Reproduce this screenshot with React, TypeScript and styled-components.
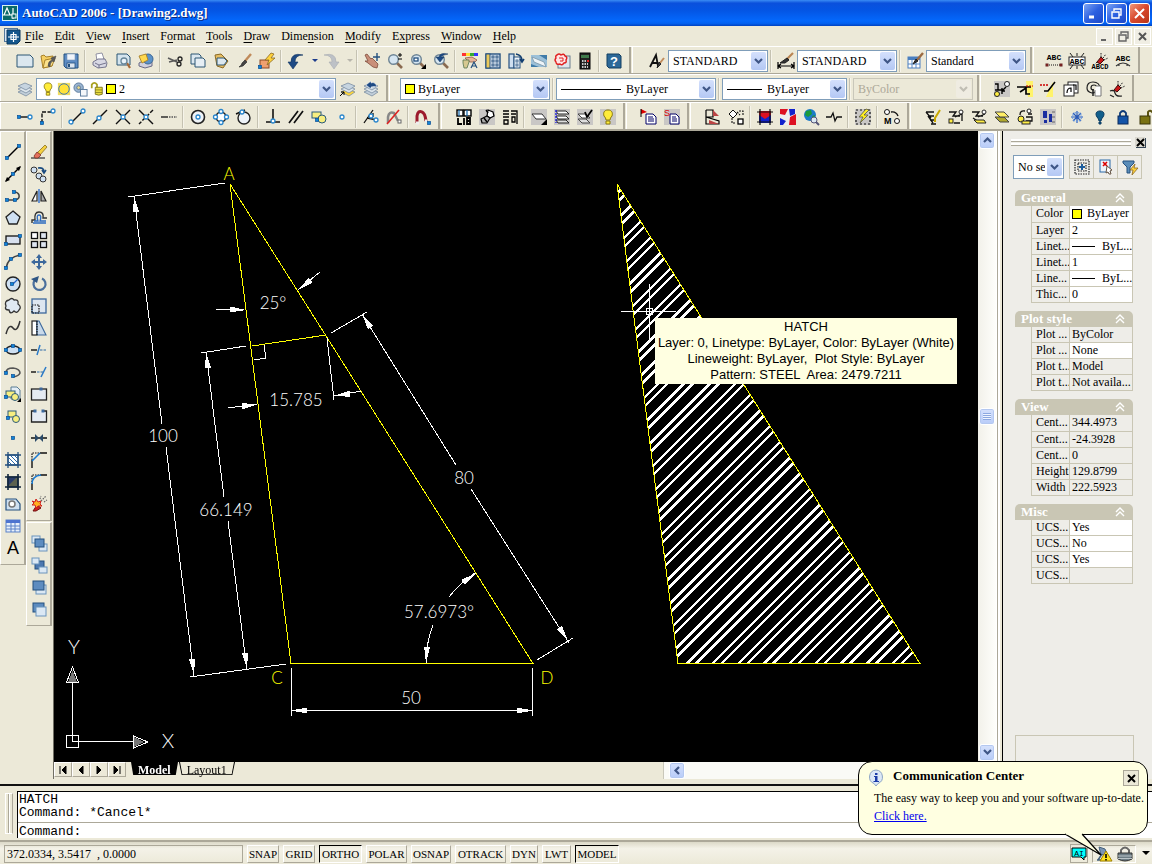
import React, { ReactNode } from 'react';
import styled, { createGlobalStyle, css } from 'styled-components';

const face = '#ece9d8';
const shade = '#aca899';
const panelGrey = '#eeede8';
const navy = '#24507f';
const pale = '#cfe0f2';
const serif = '"Liberation Serif", serif';

const GlobalStyle = createGlobalStyle`
  * { box-sizing: border-box; }
  html, body { margin: 0; padding: 0; }
  body { background: ${face}; font: 12px/16px ${serif}; color: #000; }
  button, select, input, textarea { font: inherit; color: inherit; margin: 0; padding: 0; border: 0; background: none; border-radius: 0; }
`;

/* ---------- icons ---------- */

const dot = (x: number, y: number) => <rect x={x - 1.5} y={y - 1.5} width="3" height="3" fill="#1084d8" stroke="#0b4f94" strokeWidth="0.7" />;
const ring = (x: number, y: number, r = 2) => <circle cx={x} cy={y} r={r} fill="#fff" stroke="#2a86cc" strokeWidth="1.3" />;
const stroke = (d: string, c = '#222', w = 1.4, dash?: string) => <path d={d} fill="none" stroke={c} strokeWidth={w} strokeDasharray={dash} />;
const shape = (d: string, f: string, c = '#222', w = 1) => <path d={d} fill={f} stroke={c} strokeWidth={w} />;
const box = (x: number, y: number, w: number, h: number, f: string, c = '#222', sw = 1) => <rect x={x} y={y} width={w} height={h} fill={f} stroke={c} strokeWidth={sw} />;
const greyBack = <rect width="16" height="16" fill="#c9c7c5" />;
const sheets = (a: string, b: string, c: string, line = '#6f8399') => (
  <>
    {shape('M1 11L8 8L15 11L9 15Z', c, line, 0.7)}
    {shape('M1 8L8 5L15 8L9 12Z', b, line, 0.7)}
    {shape('M1 5L8 2L15 5L9 9Z', a, line, 0.7)}
  </>
);
const brush = (
  <>
    {stroke('M15 1L9 8', '#c08a5a', 2.4)}
    {shape('M9 7L11 9L7 13L3 14Q6 12 6 10Z', '#444', '#222', 0.6)}
  </>
);
const ants = (
  <>
    {shape('M5 9L9 4L12 7L8 11Z', '#c81818', '#3a0a0a', 1)}
    {stroke('M9 4V0M11 5L14 1M12 7L16 5M5 9L3 11', '#222', 1, '1.5 1')}
  </>
);
const bulb = shape('M8 1C4 1 3 4 4 7Q6 9 6 11H10Q10 9 12 7C13 4 12 1 8 1ZM6 12H10V15H6Z', '#ffec3a', '#8a7a10', 1);
const gear = (
  <>
    <circle cx="8" cy="8" r="6.500" fill="#eef3f8" stroke="#222" strokeWidth="1.6" />
    <circle cx="8" cy="8" r="2" fill="#fff" stroke="#2a86cc" strokeWidth="1.3" />
  </>
);
const zoomGlass = (
  <>
    {stroke('M10 10L15 15', '#8a6a50', 2.6)}
    <circle cx="6.500" cy="6.500" r="4.800" fill="#d6e6f2" stroke="#6f8595" strokeWidth="1.4" />
  </>
);
const abc = (y: number) => <text x="8" y={y} textAnchor="middle" fontFamily="Liberation Mono" fontWeight="700" fontSize="8">ABC</text>;

const icons: Record<string, ReactNode> = {
  newFile: shape('M0 2H13L16 5V14H0Z', '#dbe7ef', '#2d5674'),
  open: <>{shape('M1 3L4 2L6 4L13 3L12 13L3 15Z', '#f5cf62', '#a8812a')}{shape('M5 7L15 5L12 13L3 15Z', '#fbe18c', '#a8812a')}{shape('M8 13Q8 8 12 7L11 5L16 3L14 9L13 8Q10 9 10 14Z', '#5a5a5a', '#444', 0.5)}</>,
  save: <>{shape('M1 1H15V15H3L1 13Z', '#5d8cc4', navy)}{box(4, 1, 8, 6, '#f0f4fa', '#7c98b8', 0.6)}{box(4, 10, 8, 5, '#dce6f0', navy, 0.8)}<rect x="5" y="11" width="2" height="3" fill={navy} /></>,
  print: <>{shape('M4 1L10 0L12 6L5 8Z', '#fff', '#7a7a90', 0.8)}{shape('M1 9L6 6L13 6L15 10L14 14L6 15L1 12Z', '#d8d8e4', '#6a6a84', 0.9)}{stroke('M3 10L7 12L14 10M7 12V15', '#6a6a84', 0.9)}</>,
  preview: <>{shape('M2 1H12L15 4V12H2Z', '#d4e4ee', '#2d5674')}{stroke('M12 10L15 15', '#a86b3a', 2.2)}<circle cx="9" cy="8" r="3" fill="#e9f3fa" stroke="#67869a" strokeWidth="1.3" /></>,
  publish: <>{shape('M1 10L7 7L14 9L14 13L7 15L1 13Z', '#d0d0de', '#6a6a84')}<circle cx="10" cy="6" r="5" fill="#5c92c8" stroke="#3b6796" />{shape('M1 3L8 1L10 7L4 10Z', '#ffd84c', '#a8812a', 0.9)}</>,
  cut: <>{stroke('M1 5L10 9M2 9L10 7', '#5a5a5a', 1.5)}<circle cx="13" cy="6" r="2" fill="none" stroke="#222" strokeWidth="1.3" /><circle cx="12" cy="11" r="2" fill="none" stroke="#222" strokeWidth="1.3" /></>,
  copy: <>{shape('M1 1H9L11 3V11H1Z', '#dbe7ef', '#2d5674')}{shape('M5 5H13L15 7V14H5Z', '#e6eef4', '#2d5674')}</>,
  paste: <>{shape('M2 2L8 1L15 8L10 15L4 13Z', '#e6bd62', '#8c6a24')}{shape('M4 5H11L14 8L11 12H4Z', '#dbe7ef', '#2d5674')}</>,
  match: brush,
  blockEdit: <>{box(1, 7, 9, 8, '#f0a070', '#8a4a28')}{shape('M12 0L6 7L10 7L8 12L16 5L12 5L15 1Z', '#ffd23c', '#8c6a24', 0.8)}{dot(1, 14)}</>,
  undo: shape('M15 2Q7 2 7 9H10L5 16L0 9H3Q3 -1 15 2Z', '#1e4a84', '#12345f', 0.6),
  redo: shape('M1 2Q9 2 9 9H6L11 16L16 9H13Q13 -1 1 2Z', '#bdc1c6', '#a9adb2', 0.6),
  caret: shape('M5 6H11L8 9Z', '#1c3c8c', 'none'),
  caretOff: shape('M5 6H11L8 9Z', '#b8b6ac', 'none'),
  pan: <>{shape('M1 2L3 1L7 6L8 5L11 8L14 11L13 15L9 14L4 10L1 8L4 8Z', '#c98f7a', '#7c4a3a', 0.8)}{stroke('M13 0V8M9 4H16', navy, 1.4)}</>,
  zoomRt: <>{zoomGlass}{stroke('M13 0V4M11 2H15M11 6H15', '#000', 1)}</>,
  zoomWin: <>{zoomGlass}{box(4, 5, 4, 3, '#fff', navy, 1.3)}<path d="M16 11V16H11Z" /></>,
  zoomPrev: <>{zoomGlass}{shape('M15 1Q7 -1 6 4L3 4L7 9L11 4H8Q9 2 15 1Z', '#1e4a84', '#12345f', 0.5)}</>,
  props: <><rect x="0" y="0" width="4" height="3" fill="#f33" /><rect x="4" y="0" width="4" height="3" fill="#fd3" /><rect x="8" y="0" width="4" height="3" fill="#3a3" /><rect x="12" y="0" width="4" height="3" fill="#33f" />{shape('M3 5L10 4L15 7L13 9L8 9L5 7Z', '#e6b49a', '#8c5a44', 0.8)}{shape('M1 7H7V9L5 15H2L1 10Z', '#d6c890', '#55754e', 0.8)}{stroke('M9 15L12 9L15 15M10 13H14', navy, 1.2)}</>,
  designCenter: <>{box(1, 1, 14, 14, '#eaf2fa', navy, 1.4)}<rect x="1" y="1" width="4" height="14" fill="#ecca5a" stroke={navy} />{box(7, 3, 2, 2, '#fff', navy)}{box(11, 3, 2, 2, '#fff', navy)}{box(7, 7, 2, 2, '#fff', navy)}{box(11, 7, 2, 2, '#fff', navy)}{box(7, 11, 2, 2, '#fff', navy)}{box(11, 11, 2, 2, '#fff', navy)}</>,
  toolPalette: <>{box(1, 1, 5, 14, '#cfdff0', navy, 1.2)}{box(6, 4, 6, 11, '#f0f6fb', navy, 1)}{stroke('M8 1Q14 2 14 8M12 6L14 9L16 6', '#123e70', 1.6)}{box(8, 7, 2, 2, '#fff', navy, 0.8)}{box(8, 11, 2, 2, '#fff', navy, 0.8)}</>,
  sheetSet: <><rect x="0" y="2" width="16" height="12" fill="#9cc0d8" />{shape('M1 4L13 9L15 14L3 9Z', '#eef4f8', '#7a94a4', 0.8)}<path d="M0 11L8 14H0ZM8 2H16V7Z" fill="#3f7ba8" /></>,
  markup: <>{box(4, 3, 12, 12, '#dfe6ec', '#6a7f8e')}{shape('M3 2Q5 0 7 2Q10 0 11 3Q14 4 12 7Q13 10 10 10Q8 13 6 11Q2 12 2 9Q0 7 2 5Q1 3 3 2Z', '#ffe4e4', '#e02020', 1.4)}{stroke('M5 5H9V8H6', '#e02020', 1)}</>,
  calc: <>{box(3, 0, 10, 16, '#222', '#000')}<rect x="4" y="2" width="8" height="3" fill="#3f7a4a" /><path d="M5 8H11M5 11H11M5 14H11" stroke="#fff" strokeWidth="1.6" strokeDasharray="1.5 1" /><rect x="10" y="7" width="2" height="2" fill="#e22" /></>,
  help: <>{shape('M1 1H13L15 3V15H3L1 13Z', '#2c6898', '#123e60')}<text x="8" y="13" textAnchor="middle" fontFamily="Liberation Sans" fontWeight="700" fontSize="13" fill="#fff">?</text></>,
  textStyle: <>{stroke('M1 14L7 2L9 13M3 10H9', '#111', 1.8)}{stroke('M15 5L11 10', '#c08a5a', 2)}{shape('M10 9L12 11L8 15Z', '#444')}</>,
  dimStyle: <>{stroke('M0 9V16M16 9V16M1 13H15M3 11L0 13L3 15M13 11L16 13L13 15', '#000', 1.2)}{stroke('M15 0L9 6', '#b98452', 2.2)}{shape('M9 5L11 7L7 10L2 10Z', '#333')}</>,
  tableStyle: <>{box(1, 4, 12, 11, '#fff', '#4a7fc0')}<rect x="1" y="4" width="12" height="3" fill="#4a7fc0" />{stroke('M1 11H13M5 5V15M9 5V15', '#4a7fc0', 0.9)}{stroke('M16 0L10 7', '#9c6b42', 2.4)}{shape('M9 6L11 8L6 11Z', '#333')}</>,
  abcDots: <>{abc(7)}{stroke('M1 12H15', '#111', 1.2, '1 1')}{box(0, 11, 2, 2, '#a22', '#622')}{box(14, 11, 2, 2, '#a22', '#622')}</>,
  abcMask: <>{stroke('M1 0L4 4M15 0L12 4M1 16L4 12M15 16L12 12M8 0V3M8 13V16', '#222', 1)}{box(0, 4, 16, 8, '#fff')}{abc(11)}</>,
  abcBug: <>{ants}<text x="8" y="16" textAnchor="middle" fontFamily="Liberation Mono" fontWeight="700" fontSize="7">ABCD</text></>,
  abcArc: <>{abc(8)}{stroke('M1 13Q8 7 15 13M4 11V13M12 11V13', '#333', 1.1)}</>,
  layers: sheets('#c6d4e0', '#dde6ec', '#c2cfda'),
  makeCurrent: <>{sheets('#c6d4e0', '#dde6ec', '#ffd63c')}{stroke('M0 15L4 11M1 11H4V14', '#000', 1)}</>,
  layerPrev: <>{sheets('#c6d4e0', '#dde6ec', '#c2cfda')}{shape('M14 6Q12 0 8 2V0L3 4L8 8V6Q11 5 14 6Z', '#1e4a84', '#fff', 0.5)}</>,
  bulbOn: bulb,
  sun: <><rect x="1" y="1" width="14" height="14" fill="#f0dc60" /><circle cx="8" cy="8" r="6" fill="#ffe23a" stroke="#2b6cb8" /></>,
  vpFreeze: <><circle cx="6" cy="6" r="5" fill="#9ab4d0" stroke="#5a7a9c" /><circle cx="6" cy="6" r="2" fill="#e8d88c" stroke="#5a7a9c" />{box(8, 8, 7, 7, '#f4f7fa', '#5a7a9c')}</>,
  unlock: <>{stroke('M2 7V3Q5 -1 8 3V7', '#a8a020', 2)}{shape('M6 6H14V14Q10 16 6 14Z', '#e8dc40', '#77701a')}{stroke('M6 9H14M6 12H14', '#77701a', 0.8)}</>,
  layWalk: <>{greyBack}{stroke('M1 3H4V9M1 9H8V13M12 6L8 10M8 7V10H11', '#000', 1.4)}<circle cx="3" cy="13" r="2.500" fill="#ffee44" stroke="#222" /><circle cx="13" cy="3" r="2.500" fill="#fff" stroke="#222" /></>,
  matchYellow: <><path d="M9 0H16V16H11Z" fill="#fff36a" />{stroke('M0 6H14M3 11L9 7V13H13', '#000', 1.7)}{stroke('M9 5H16', '#c00', 1, '2 1')}</>,
  trimYellow: <><path d="M13 1V16H6Z" fill="#fff36a" />{stroke('M0 4H9', '#c00', 1.6, '2 1')}{stroke('M15 1L8 10H4', '#000', 1.6)}</>,
  copyPages: <>{box(5, 1, 10, 11, '#fff')}{box(1, 4, 10, 11, '#fff')}{stroke('M4 12Q4 7 8 7V11M10 4H13V9', '#000', 1.2)}</>,
  spiral: <>{stroke('M8 9Q5 9 5 7Q5 4 8 4Q11 4 11 8Q10 12 6 12Q1 11 1 7Q1 1 7 1Q14 1 14 8', '#222', 1.2)}{shape('M10 5H15V15H9V9', '#fff', '#777')}{stroke('M7 8V15', '#222', 1.5)}</>,
  bug: <>{ants}{stroke('M1 10Q5 8 6 12T13 15M1 14L5 16', '#222', 1.2)}</>,
  snapTemp: <>{stroke('M1 8H14', '#111', 1.4)}{dot(2, 8)}{ring(13, 8)}</>,
  snapFrom: <>{stroke('M2 14V3H12', '#111', 1.4, '4 1.5')}{dot(2, 14)}{ring(13, 2)}</>,
  snapEnd: <>{stroke('M2 14L14 2', '#111')}{ring(2, 13)}{ring(14, 2)}</>,
  snapMid: <>{stroke('M1 15L15 1', '#111')}{ring(7, 9)}</>,
  snapInt: <>{stroke('M1 1L15 15M15 1L1 15', '#111')}{ring(8, 8)}</>,
  snapApp: <>{stroke('M1 1L15 15', '#111')}{stroke('M15 1L1 15', '#111', 1.4, '4 1.5')}{ring(8, 8)}</>,
  snapExt: <>{stroke('M0 8H7', '#222')}{stroke('M8 8H16', '#555', 1.4, '1.5 1')}</>,
  snapCen: gear,
  snapQua: <><circle cx="8" cy="8" r="5" fill="#fff" stroke="#222" strokeWidth="1.4" />{ring(8, 2.5)}{ring(8, 13.5)}{ring(2.5, 8)}{ring(13.5, 8)}</>,
  snapTan: <><circle cx="8" cy="9" r="6" fill="#eef3f8" stroke="#222" strokeWidth="1.4" />{stroke('M0 5L9 1', '#111')}{ring(6, 3)}</>,
  snapPer: <>{stroke('M8 0V12M1 13H15', '#111', 1.6)}{ring(8, 12)}</>,
  snapPar: stroke('M1 14L10 2M6 14L15 2', '#111', 1.7),
  snapIns: <>{box(1, 3, 9, 6, '#f7ee80', '#2a5a7a')}<circle cx="11" cy="10" r="4" fill="#f7ee80" stroke="#2a5a7a" />{dot(6, 11)}</>,
  snapNode: ring(8, 8),
  snapNear: <>{stroke('M1 14L10 1M10 4V8M4 9L14 11', '#111', 1.3)}{ring(8, 7)}{ring(13, 11)}</>,
  snapNone: <>{stroke('M2 14V8Q3 2 8 4L12 12', '#888', 2.5)}{stroke('M1 15L13 1', '#d22', 1.6)}{box(12, 11, 3, 3, '#fff', '#666')}</>,
  snapSet: <>{stroke('M2 14V7Q3 1 7 3Q10 4 11 12', '#9c1a2c', 3)}{stroke('M1 14H4M10 12H12', '#eee', 3)}{dot(14, 14)}</>,
  lib: <>{box(1, 1, 6, 6, '#fff', '#000', 1.4)}{box(8, 1, 7, 6, '#fff', '#000', 1.4)}<path d="M3 1V7M11 1V7" stroke="#16a" strokeWidth="1.2" />{stroke('M2 9V15H6M8 9V16M11 9V15H14V9ZM11 12H14', '#000', 1.8)}</>,
  bolt: <>{greyBack}{shape('M9 1L14 3L15 7L11 9L8 7Z', '#fff', '#000', 1.2)}{shape('M8 7L11 9L8 14L3 14L2 10Z', '#aaa', '#000', 1.2)}{stroke('M5 9L8 13M7 1L9 4', '#000', 1.4)}</>,
  bookmark: <>{stroke('M1 2H7M1 5H7M1 8H7M2 11H6V15H2ZM9 2H15V15M9 5H14M10 8V13H13V8Z', '#000', 1.3)}</>,
  sheetCorner: <>{greyBack}{shape('M1 5H11L15 10H5Z', '#fff', '#333')}<path d="M16 10V16H10Z" /></>,
  stackGrey: <>{greyBack}{shape('M2 2H12L15 5H4Z', '#fff', '#222')}{shape('M2 7H12L15 10H4Z', '#fff', '#222')}{shape('M2 11H12L15 14H4Z', '#ddd', '#222')}{stroke('M2 1V14', '#22d', 1.4, '2 1')}</>,
  stackCheck: <>{greyBack}{shape('M1 5H9L13 9H5Z', '#fff', '#444')}{shape('M1 10H9L13 14H5Z', '#ddd', '#444')}{stroke('M8 3L10 8L15 1', '#000', 1.8)}</>,
  bulbGrey: <>{greyBack}{bulb}</>,
  pageRed: <>{shape('M5 5H12L15 8V15H5Z', '#fff', '#006')}{stroke('M7 8H12M7 10H13M7 12H13', '#006', 1)}<path d="M0 0L6 3L0 5Z" fill="#d00" />{stroke('M0 0V8', '#000', 1)}</>,
  pageS: <>{greyBack}{shape('M6 5H12L15 8V15H6Z', '#fff', '#006')}{stroke('M8 8H12M8 10H13M8 12H13', '#006', 1)}<text x="0" y="7" fontSize="9" fill="#d00" fontFamily="Liberation Sans">S</text></>,
  flags: <>{stroke('M1 1V15H8M1 1H8V8H1M1 8L14 12V15L1 15', '#000', 1.2)}<path d="M8 1L14 7H8ZM4 11L14 15H4Z" fill="#b44" /></>,
  blocksSwap: <>{shape('M5 1L9 5L5 9L1 5Z', '#fff', '#111')}{stroke('M4 9V14H8M11 2H15V7M9 3L12 6', '#111', 1.1, '2 1')}{box(10, 10, 5, 5, '#fff', '#000', 1.3)}</>,
  imgA: <><rect x="2" y="2" width="12" height="12" fill="#d12" /><path d="M2 6L8 10L14 6V14H2Z" fill="#12c" />{stroke('M3 0V16M0 3H16M13 0V16M0 13H16', '#111', 1.2)}</>,
  imgB: <><rect width="16" height="16" fill="#eee" /><path d="M0 0H8L5 6L0 5ZM10 8L16 5V16H9Z" fill="#d12" /><path d="M9 0H15V5L10 7ZM0 9L6 12L3 16H0Z" fill="#12c" /></>,
  globe: <><circle cx="7" cy="6" r="6" fill="#1a7ac8" /><path d="M3 2L8 1L9 5L5 8L2 6ZM9 7L12 6L11 10Z" fill="#1a9a3a" /><circle cx="11" cy="11" r="3" fill="#dbe8f2" stroke="#557" />{stroke('M13 13L16 16', '#557', 2)}</>,
  pulse: stroke('M0 8H5L7 4L9 12L11 8H16', '#111', 1.3),
  quick: <>{greyBack}{stroke('M1 1H15V15H1Z', '#111', 1.2, '2 2')}{shape('M11 0L4 8H8L5 14L13 6H9L14 1Z', '#ffee22', '#554', 0.8)}</>,
  rename: <><circle cx="3" cy="3" r="2.500" fill="#fff" stroke="#111" /><circle cx="13" cy="12" r="2.500" fill="#fff" stroke="#111" />{stroke('M7 3Q12 2 14 7', '#111', 1.4)}<text x="0" y="15" fontSize="9" fontWeight="700" fontFamily="Liberation Sans">M</text></>,
  layEdit: <>{stroke('M1 3H9M3 7H9M5 11H10M6 15H11M1 3L6 9L3 7L8 14', '#111', 1.3)}{stroke('M15 1L10 9V13', '#caa800', 2)}</>,
  layMatch: <>{stroke('M1 3H8L5 7H12M7 8L14 5V12M6 14H12', '#111', 1.3)}<circle cx="13" cy="3" r="2" fill="#fff" stroke="#222" />{box(1, 10, 4, 4, '#ffee44')}</>,
  layCur: <>{stroke('M1 3H8L5 7H12M7 8L14 5M2 9L8 13', '#111', 1.3)}<circle cx="13" cy="3" r="2" fill="#fff" stroke="#222" />{shape('M3 11H13L15 14H6Z', '#ffee44')}</>,
  layFlat: <>{shape('M1 8H10L15 13H6Z', '#b0a92c', '#444')}{shape('M1 3H10L15 8H6Z', '#ffee66', '#444')}</>,
  layCopy: <>{stroke('M8 2Q3 1 3 6M9 8H15V12H9M11 5H15', '#111', 1.3)}<circle cx="12" cy="2" r="2" fill="#fff" stroke="#222" /><circle cx="4" cy="10" r="3" fill="#ffee44" stroke="#222" />{box(5, 12, 8, 3, '#ffee44')}</>,
  layIso: <>{greyBack}<path d="M3 2H7V9H3ZM4 11H7V14H4ZM9 5H12V13H9Z" fill="#1a2ea0" />{stroke('M12 3H15M12 8H15M12 13H15', '#666', 1)}</>,
  snow: <>{stroke('M8 2V14M2 8H14M4 4L12 12M12 4L4 12', '#2a5ab8', 1.2)}<circle cx="8" cy="8" r="4.500" fill="none" stroke="#6a9ae0" strokeWidth="1.2" strokeDasharray="2 1" /></>,
  bulbOff: shape('M8 2C4 2 3 5 5 8Q7 10 7 12H9Q9 10 11 8C13 5 12 2 8 2ZM7 13H9V15H7Z', '#12608c', '#0a3a60', 1),
  lock: <>{stroke('M5 8V4Q8 0 11 4V8', '#0e3a78', 1.8)}{box(3, 7, 10, 8, '#1454a8', '#0a2a5a')}</>,
  lockOpen: <>{stroke('M10 8V3Q12 0 15 4', '#5a5210', 2)}{box(2, 7, 10, 8, '#7a7212', '#3a3608')}</>,
  /* draw */
  line: <>{stroke('M2 14L14 2', '#000')}{dot(2, 14)}{dot(14, 2)}</>,
  xline: <>{stroke('M1 15L15 1', '#000')}<path d="M0 16L2 11L5 14ZM16 0L14 5L11 2Z" />{dot(8, 8)}</>,
  pline: <>{stroke('M2 12H10M10 12Q15 11 14 7Q13 4 9 4', '#444', 1.6)}{dot(2, 12)}{dot(10, 12)}{dot(9, 4)}</>,
  polygon: shape('M8 1L15 7L12 14H4L1 7Z', pale, '#222', 1.3),
  rect: <>{box(1, 4, 14, 8, '#d8e0ee', '#111', 1.3)}{dot(1, 12)}{dot(15, 4)}</>,
  arc: <>{stroke('M1 14Q3 3 15 1', '#444', 1.5)}{dot(1, 14)}{dot(6, 5)}{dot(15, 1)}</>,
  circle: <><circle cx="8" cy="8" r="7" fill={pale} stroke="#222" strokeWidth="1.4" />{stroke('M8 8L13 3', '#26c', 1.3)}{dot(7, 8)}</>,
  cloud: shape('M4 2Q7 -1 9 2Q14 1 13 6Q17 9 14 12Q12 16 9 13Q5 17 4 12Q-1 12 1 8Q-1 3 4 2Z', '#e0e9f2', '#333', 1.3),
  spline: stroke('M1 14Q4 3 8 8T15 1', '#333', 1.5),
  ellipse: <><ellipse cx="8" cy="8" rx="7" ry="4" fill={pale} stroke="#222" strokeWidth="1.3" />{dot(1, 8)}{dot(15, 8)}{dot(8, 4)}</>,
  ellArc: <>{stroke('M1 9Q1 4 8 4Q15 5 15 9Q14 12 8 13', '#555', 1.6)}{dot(1, 9)}{dot(8, 12)}</>,
  insBlock: <>{shape('M6 1H12L15 4V13H6Z', '#e3edf5', '#5a7c94')}{box(1, 5, 9, 6, '#f7ee80', '#2a5a7a')}<circle cx="10" cy="11" r="3.500" fill="#f7ee80" stroke="#2a5a7a" /><path d="M16 12V16H12Z" />{dot(1, 11)}</>,
  mkBlock: <>{box(3, 3, 8, 6, '#f7ee80', '#2a5a7a')}<circle cx="11" cy="11" r="3.500" fill="#f7ee80" stroke="#2a5a7a" />{dot(3, 10)}</>,
  point: dot(8, 8),
  hatch: <>{box(3, 3, 10, 10, '#fff', navy, 1.2)}{stroke('M3 5L11 13M5 3L13 11M3 9L7 13M9 3L13 7', '#2a6aa8', 1)}{stroke('M0 3H16M0 13H16M3 0V16M13 0V16', navy, 1.3)}</>,
  gradient: <>{box(3, 3, 10, 10, '#5c6250', '#12263c', 1.2)}<path d="M3 3H12L3 12Z" fill="#2a3c6a" />{stroke('M0 3H16M0 13H16M3 0V16M13 0V16', '#12263c', 1.6)}</>,
  region: <>{shape('M1 3H11L15 8V14H1Z', '#cfe0f0', navy, 1.2)}<circle cx="7" cy="8" r="3" fill="#fff" stroke="#777" strokeWidth="1.5" /></>,
  table: <>{box(1, 2, 14, 12, '#e8f0fb', '#5a82c8')}<rect x="1" y="2" width="14" height="3" fill="#4d74d0" />{stroke('M1 8H15M1 11H15M6 5V14M10 5V14', '#5a82c8', 1)}</>,
  mtext: <text x="8" y="14" textAnchor="middle" fontFamily="Liberation Sans" fontSize="18">A</text>,
  /* modify */
  erase: <>{stroke('M0 14H14', '#333', 1.2)}{shape('M14 1L16 3L9 11L6 9Z', '#f4d040', '#8a7020', 0.8)}{shape('M6 8L10 11L7 14H4L3 12Z', '#e4705c', '#7a3428', 0.8)}</>,
  copyObj: <><circle cx="3" cy="4" r="3" fill={pale} stroke="#333" /><circle cx="8" cy="10" r="3" fill={pale} stroke="#333" /><circle cx="12" cy="13" r="3" fill={pale} stroke="#333" />{stroke('M7 2Q13 1 13 6M11 4L13 7L15 4', '#1c4c80', 1.6)}</>,
  mirror: <>{shape('M1 13L6 3V13Z', '#fff', '#222', 1.2)}{shape('M15 13L10 3V13Z', '#aaa', '#222', 1.2)}{stroke('M8 1V15', '#26c', 1.3)}</>,
  offset: <>{stroke('M1 13V10H4Q3 2 8 2Q13 2 12 8H16', '#333', 1.4)}{stroke('M2 13H15M3 11H7Q5 5 8 5Q11 5 9 11H15', '#2a6ac0', 1.3)}</>,
  array: <>{box(0.5, 0.5, 6, 6, '#fff', '#111', 1.3)}{box(9.5, 0.5, 6, 6, '#dfe6f0', '#111', 1.3)}{box(0.5, 9.5, 6, 6, '#dfe6f0', '#111', 1.3)}{box(9.5, 9.5, 6, 6, '#dfe6f0', '#111', 1.3)}</>,
  move: <>{stroke('M8 2V14M2 8H14', '#3c689c', 2)}<path d="M8 0L11 4H5ZM8 16L11 12H5ZM0 8L4 5V11ZM16 8L12 5V11Z" fill="#3c689c" /></>,
  rotate: <>{stroke('M4 4A6 6 0 1 0 11 2.500', '#4a6f9c', 2.2)}<path d="M0 3L8 0L6 7Z" fill="#2f5684" /></>,
  scale: <>{box(1, 1, 14, 14, '#dde6f0', '#3c689c', 1.3)}{stroke('M1 7H8V15H1Z', '#111', 1.2, '1.5 1')}</>,
  stretch: <>{box(1, 1, 5, 14, '#fff', '#222', 1.2)}{shape('M8 1L15 15H6V1Z', '#c9d9ea', '#3c689c', 1.1)}{stroke('M6 1V15', '#111', 1.2, '1.5 1')}</>,
  trim: <>{stroke('M0 8H6', '#111')}{stroke('M9 3L6 13', '#2a7ac8', 1.5)}{stroke('M9 8H16', '#2a6aa8', 1.2, '2.5 1')}</>,
  extend: <>{stroke('M0 8H5', '#111')}{stroke('M15 3L10 13', '#2a7ac8', 1.5)}{stroke('M6 8H12', '#2a6aa8', 1.2, '2.5 1')}</>,
  breakPt: <>{box(0.5, 3, 15, 11, '#e4eaf2', '#222', 1.3)}{box(9, 2, 2, 2, '#3c689c', '#3c689c')}</>,
  breakObj: <>{shape('M3 3H0.5V14H15.500V3H12', '#e4eaf2', '#222', 1.3)}{box(3, 2, 2, 2, '#3c689c', '#3c689c')}{box(11, 2, 2, 2, '#3c689c', '#3c689c')}</>,
  join: <>{stroke('M0 8H16', '#111', 1.5)}<path d="M4 4L8 8L4 12ZM12 4L8 8L12 12Z" fill="#2a4a68" /></>,
  chamfer: <>{stroke('M1 16V8M9 1H16', '#111', 1.4)}{stroke('M1 8V1H9', '#111', 1.2, '1.5 1')}{stroke('M1 9L9 1', '#1a7ad0', 1.6)}</>,
  fillet: <>{stroke('M1 16V9M9 1H16', '#111', 1.4)}{stroke('M1 8V1H9', '#111', 1.2, '1.5 1')}{stroke('M1 10Q1 2 10 1', '#1a7ad0', 1.6)}</>,
  explode: <>{shape('M2 15L6 9L10 12L5 15Z', '#d02020', '#701010')}<path d="M1 5L4 6L5 3L7 6L10 5L9 8L11 10L7 10L5 12L4 9L1 9L3 7Z" fill="#ffb020" stroke="#d02020" />{stroke('M10 5L15 0M13 6L16 4M9 3L10 0', '#666', 1.2, '1.5 1')}</>,
  front: <>{box(1, 1, 8, 7, '#dbe8f4', '#6a94bc')}{box(8, 9, 8, 7, '#dbe8f4', '#6a94bc')}{box(4, 4, 9, 8, '#5d8cc0', navy)}</>,
  back: <>{box(4, 4, 9, 8, '#4d78b0', navy)}{box(1, 1, 7, 6, '#dbe8f4', '#6a94bc')}{box(8, 10, 8, 6, '#dbe8f4', '#6a94bc')}</>,
  above: <>{box(5, 6, 10, 9, '#dbe8f4', '#6a94bc')}{box(2, 2, 11, 9, '#5d8cc0', navy)}</>,
  under: <>{box(2, 2, 11, 9, '#5d8cc0', navy)}{box(5, 6, 10, 9, '#dbe8f4', '#6a94bc')}</>,
  pickAdd: <>{stroke('M1 1H15V15H1Z', '#222', 1.2, '1.5 1')}{stroke('M4 4H12V12H4Z', '#222', 1.2, '1.5 1')}{stroke('M8 5V11M5 8H11', '#1c5c9c', 2)}</>,
  selectObj: <>{box(2, 1, 10, 12, '#eef4fa', '#2a6aa8')}{stroke('M5 3L9 7M9 3L5 7', '#d00', 1.6)}{shape('M9 7L14 11L12 12L13 15L11 15L10 13L8 14Z', '#fff', '#654')}</>,
  quickSel: <>{shape('M1 2H12V4L8 8V14H5V8L1 4Z', '#5a8cb8', navy)}{shape('M13 5L8 11H11L10 16L16 9H12Z', '#ffd23c', '#8c6a24', 0.8)}</>,
};

const Glyph = styled.svg`
  display: block;
  flex: none;
  overflow: visible;
`;
const Icon = ({ name, size = 16 }: { name: string; size?: number }) => (
  <Glyph width={size} height={size} viewBox="0 0 16 16" aria-hidden="true">
    {icons[name]}
  </Glyph>
);

/* ---------- frame ---------- */

const Screen = styled.div`
  position: relative;
  display: flex;
  flex-direction: column;
  min-height: 100vh;
  overflow: hidden;
  background: ${face};
`;

const TitleBar = styled.header`
  display: flex;
  align-items: center;
  height: 26px;
  padding: 0 2px;
  gap: 2px;
  background: linear-gradient(#3a8cf4 0, #0a50dc 12%, #0455e4 40%, #0468fc 80%, #0361f0 90%, #0242c0 100%);
  color: #fff;
`;
const Title = styled.h1`
  flex: 1;
  margin: 0 0 0 2px;
  font-size: 13px;
  line-height: 16px;
  text-shadow: 1px 1px #0a2a80;
`;
const WindowButton = styled.button<{ $close?: boolean }>`
  display: grid;
  place-items: center;
  width: 21px;
  height: 21px;
  border: 1px solid #fff;
  border-radius: 3px;
  background: ${(p) => (p.$close ? 'linear-gradient(135deg, #f0987c, #d8482c 50%, #b83418)' : 'linear-gradient(135deg, #7ca4f4, #2c60e0 50%, #1c48c8)')};
`;

const MenuBar = styled.nav`
  display: flex;
  align-items: center;
  height: 20px;
  padding: 0 1px 0 4px;
`;
const Menus = styled.div`
  display: flex;
  flex: 1;
  gap: 11px;
  margin-left: 5px;
  u { text-underline-offset: 2px; }
`;
const ChildButton = styled.button`
  display: grid;
  place-items: center;
  width: 17px;
  height: 17px;
  margin-left: 2px;
  border: 1px solid #fff;
  background: #f0eee4;
`;

const ToolRow = styled.div`
  display: flex;
  height: 28px;
  border-top: 1px solid #fff;
  border-bottom: 1px solid ${shade};
  overflow: hidden;
`;
const ToolGroup = styled.div<{ $lead?: number }>`
  display: flex;
  flex: none;
  align-items: center;
  padding: 2px 4px 0 ${(p) => p.$lead ?? 12}px;
  margin-right: 1px;
  border-left: 1px solid #fff;
  border-right: 2px solid ${shade};
`;
const ToolButton = styled.button<{ $w?: number; $h?: number }>`
  display: grid;
  place-items: center;
  flex: none;
  width: ${(p) => p.$w ?? 23}px;
  height: ${(p) => p.$h ?? 22}px;
`;
const Divider = styled.span`
  flex: none;
  width: 2px;
  height: 22px;
  margin: 0 2px;
  border-left: 1px solid #c5c2b2;
  border-right: 1px solid #f6f4ea;
`;

const Combo = styled.label<{ $w: number; $off?: boolean; $h?: number }>`
  display: flex;
  flex: none;
  align-items: center;
  width: ${(p) => p.$w}px;
  height: ${(p) => p.$h ?? 22}px;
  padding: 1px 1px 1px 4px;
  gap: 2px;
  border: 1px solid ${(p) => (p.$off ? '#c9c7ba' : '#7f9db9')};
  background: ${(p) => (p.$off ? face : '#fff')};
  color: ${(p) => (p.$off ? shade : '#000')};
`;
const Picker = styled.select`
  flex: 1;
  min-width: 0;
  height: 18px;
  appearance: none;
  opacity: 1;
  outline: none;
  text-overflow: clip;
`;
const ArrowBox = styled.span<{ $off?: boolean }>`
  display: grid;
  place-items: center;
  flex: none;
  width: 15px;
  height: 18px;
  border-radius: 2px;
  background: ${(p) => (p.$off ? '#efece2' : 'linear-gradient(#d4e0fc, #b4c8f4)')};
`;
const Swatch = styled.span`
  flex: none;
  width: 10px;
  height: 10px;
  margin-right: 1px;
  border: 1px solid #000;
  background: #ff0;
`;
const Rule = styled.span<{ $w: number }>`
  flex: none;
  width: ${(p) => p.$w}px;
  height: 1px;
  margin-right: 3px;
  background: #000;
`;

const Chevron = ({ dir = 'down', color = '#3f5686' }: { dir?: 'down' | 'up' | 'left'; color?: string }) => {
  const d = { down: 'M1 2L4.500 5.500L8 2', up: 'M1 6L4.500 2.500L8 6', left: 'M6 1L2.500 4.500L6 8' }[dir];
  return (
    <Glyph width="9" height="9" viewBox="0 0 9 9" aria-hidden="true">
      <path d={d} fill="none" stroke={color} strokeWidth="2.2" />
    </Glyph>
  );
};

interface ComboProps { label: string; value: string; width: number; off?: boolean; height?: number; children?: ReactNode }
const ComboBox = ({ label, value, width, off, height, children }: ComboProps) => (
  <Combo $w={width} $off={off} $h={height}>
    {children}
    <Picker aria-label={label} disabled={off}><option>{value}</option></Picker>
    <ArrowBox $off={off}><Chevron color={off ? '#c0beb4' : undefined} /></ArrowBox>
  </Combo>
);

/* A vertical bar in the list stands for a divider. */
const Tools = ({ list }: { list: string }) => (
  <>
    {list.split(' ').map((n, i) =>
      n === '|' ? <Divider key={i} /> : (
        <ToolButton key={n + i} aria-label={n} $w={n.startsWith('caret') ? 12 : 23}>
          <Icon name={n} />
        </ToolButton>
      ),
    )}
  </>
);

/* ---------- work area ---------- */

const Work = styled.div`
  display: flex;
  flex: 1;
  min-height: 0;
  border-top: 1px solid ${shade};
`;
const PaletteColumn = styled.div`
  display: flex;
  flex-direction: column;
  flex: none;
  width: 26px;
`;
const Palette = styled.div`
  display: flex;
  flex-direction: column;
  align-items: center;
  padding: 9px 0 5px;
  margin-bottom: 1px;
  border: 1px solid #fff;
  border-right: 2px solid ${shade};
  border-bottom: 1px solid ${shade};
`;
const DrawColumn = styled.main`
  display: flex;
  flex-direction: column;
  flex: 1;
  min-width: 0;
  margin-left: 1px;
  border-left: 1px solid #716f64;
`;
const DrawRow = styled.div`
  display: flex;
  flex: 1;
  min-height: 0;
`;
const Canvas = styled.div`
  position: relative;
  flex: 1;
  min-width: 0;
  overflow: hidden;
  background: #000;
`;
const Sheet = styled.svg`
  display: block;
  width: 100%;
  height: 100%;
  font-family: Lato, sans-serif;
  font-weight: 300;
  font-size: 17px;
`;
const Tip = styled.div`
  position: absolute;
  left: 601px;
  top: 187px;
  width: 302px;
  padding: 1px 0;
  background: #ffffe1;
  font: 13px/16px "Liberation Sans", sans-serif;
  text-align: center;
  white-space: pre;
`;
const VScroll = styled.div`
  display: flex;
  flex-direction: column;
  align-items: center;
  flex: none;
  width: 18px;
  padding: 1px 0;
  background: linear-gradient(90deg, #f2f1ea, #fefefb);
`;
const Track = styled.span<{ $share: number }>`
  flex: ${(p) => p.$share};
`;
const ScrollButton = styled.button`
  display: grid;
  place-items: center;
  width: 16px;
  height: 17px;
  border: 1px solid #fff;
  border-radius: 3px;
  background: linear-gradient(#d4e0fc, #b8ccf8);
  box-shadow: inset 0 0 0 1px #b4c8f0;
`;
const Grip = styled.span`
  width: 8px;
  height: 7px;
  background: repeating-linear-gradient(#8ca8e0 0 1px, #eef4ff 1px 2px);
`;
const TabRow = styled.div`
  display: flex;
  height: 17px;
  background: ${face};
`;
const TabArrow = styled.button`
  display: grid;
  place-items: center;
  width: 18px;
  height: 15px;
  border: 1px solid #fff;
  border-right-color: ${shade};
  border-bottom-color: ${shade};
`;
const Tab = styled.button<{ $on?: boolean }>`
  position: relative;
  height: 15px;
  padding: 0 ${(p) => (p.$on ? 7 : 8)}px;
  margin-left: ${(p) => (p.$on ? 5 : 1)}px;
  line-height: 14px;
  isolation: isolate;
  ${(p) => p.$on && css`color: #fff; font-weight: 700;`}
  &::before {
    content: '';
    position: absolute;
    inset: 0;
    z-index: -1;
    border: 1px solid #000;
    border-top: 0;
    background: ${(p) => (p.$on ? '#000' : face)};
    transform: perspective(40px) rotateX(-16deg);
    transform-origin: top;
  }
`;
const TabFill = styled.span`flex: 1;`;
const HScroll = styled.div`
  display: flex;
  width: 333px;
  padding-left: 5px;
  border-left: 1px solid #c9c7ba;
  background: #fafaf6;
`;
const Bevel = styled.div`
  flex: none;
  width: 7px;
  border-left: 1px solid #fff;
  border-right: 1px solid #000;
  background: linear-gradient(90deg, ${shade} 0 1px, #fff 1px 3px, ${face} 3px);
`;

/* ---------- properties ---------- */

const Properties = styled.aside`
  flex: none;
  width: 149px;
  display: flex;
  flex-direction: column;
  padding: 5px 0 0 12px;
  background: ${panelGrey};
`;
const PanelGrip = styled.div`
  display: flex;
  align-items: center;
  justify-content: space-between;
  height: 12px;
  padding-right: 7px;
`;
const GripBars = styled.span`
  width: 120px;
  height: 7px;
  margin-left: -4px;
  background: linear-gradient(#fff 0 2px, ${shade} 2px 3px, ${panelGrey} 3px 4px, #fff 4px 6px, ${shade} 6px);
`;
const PanelClose = styled.button`
  display: grid;
  place-items: center;
  width: 10px;
  height: 10px;
  background: #dad8d0;
  box-shadow: 1px 1px #345;
`;
const PickRow = styled.div`
  display: flex;
  gap: 5px;
  margin: 7px 0 11px -2px;
`;
const PickButtons = styled.div`
  display: flex;
  button { width: 25px; height: 24px; margin-right: -1px; border: 1px solid #c9c6b4; }
`;
const Section = styled.section`margin: 0 19px 8px 0;`;
const SectionHead = styled.h2`
  display: flex;
  justify-content: space-between;
  align-items: center;
  height: 16px;
  margin: 0;
  padding: 0 8px 0 6px;
  border-radius: 5px 5px 0 0;
  background: #c9c6b4;
  color: #fff;
  font-size: 13px;
  line-height: 16px;
`;
const Grid = styled.table`
  width: 102px;
  margin-left: 16px;
  border-collapse: collapse;
  table-layout: fixed;
`;
const Name = styled.th`
  width: 38px;
  height: 16px;
  padding: 0 0 0 4px;
  border: 1px solid #c9c6b4;
  border-top: 0;
  font-weight: 400;
  line-height: 15px;
  text-align: left;
  white-space: nowrap;
  overflow: hidden;
`;
const Value = styled.td<{ $ro?: boolean }>`
  height: 16px;
  padding: 0 0 0 2px;
  border: 1px solid #c9c6b4;
  border-top: 0;
  background: ${(p) => (p.$ro ? panelGrey : '#fff')};
  line-height: 15px;
  white-space: nowrap;
  overflow: hidden;
  > span { display: flex; align-items: center; gap: 4px; }
`;
const Hint = styled.div`
  flex: 1;
  display: flex;
  flex-direction: column;
  justify-content: flex-end;
  margin-right: 18px;
  &::after { content: ''; height: 42px; border: 1px solid #c9c6b4; }
`;

/* ---------- command line and status ---------- */

const CommandArea = styled.section`
  display: flex;
  height: 58px;
  margin-top: 5px;
  padding: 5px 0 2px 5px;
  gap: 4px;
  border-top: 2px solid #111;
  border-bottom: 2px solid ${shade};
`;
const CommandGrip = styled.span`
  width: 8px;
  margin: 2px 0 4px;
  border: 1px solid #fff;
  border-right-color: ${shade};
  background: linear-gradient(90deg, transparent 0 2px, ${shade} 2px 3px, #fff 3px 4px, transparent 4px);
`;
const CommandBox = styled.div`
  flex: 1;
  border: 1px solid #000;
  border-width: 1px 0 0 1px;
  background: #fff;
  font: 13px/13px "Liberation Mono", monospace;
`;
const History = styled.div`
  height: 31px;
  padding: 1px 1px 0;
  border-bottom: 1px solid ${shade};
  white-space: pre;
`;
const Prompt = styled.label`
  display: flex;
  height: 17px;
  align-items: center;
  padding-left: 1px;
  input { flex: 1; outline: none; }
`;
const Status = styled.footer`
  display: flex;
  align-items: center;
  height: 22px;
  gap: 4px;
  padding: 1px 0 0 4px;
  background: linear-gradient(#dcd9c8, #f4f2e8 30%, ${face});
`;
const Coords = styled.output`
  width: 239px;
  height: 18px;
  padding-left: 2px;
  border: 1px solid ${shade};
  line-height: 17px;
  white-space: pre;
`;
const Toggle = styled.button<{ $w: number; $on?: boolean }>`
  width: ${(p) => p.$w}px;
  height: 18px;
  border: 1px solid;
  border-color: ${(p) => (p.$on ? '#000 #fff #fff #000' : `#fff ${shade} ${shade} #fff`)};
  font-size: 11px;
  line-height: 16px;
  white-space: nowrap;
`;
const TrayStart = styled.span`
  display: grid;
  place-items: center;
  width: 18px;
  height: 19px;
  margin-left: auto;
  border: 1px solid ${shade};
`;
const Tray = styled.div`
  display: flex;
  align-items: center;
  justify-content: space-around;
  width: 44px;
  height: 18px;
  border: 1px solid;
  border-color: ${shade} #fff #fff ${shade};
`;

const Balloon = styled.aside`
  position: absolute;
  right: 4px;
  bottom: 29px;
  width: 290px;
  height: 74px;
  padding: 8px 8px 0 9px;
  border: 1px solid #000;
  border-radius: 14px;
  background: #ffffe1;
`;
const BalloonHead = styled.div`
  display: flex;
  align-items: flex-start;
  height: 20px;
  h2 { flex: 1; margin: -2px 0 0 9px; font-size: 13px; line-height: 16px; }
`;
const BalloonClose = styled.button`
  display: grid;
  place-items: center;
  width: 16px;
  height: 16px;
  border: 1px solid ${shade};
  background: ${face};
`;
const BalloonText = styled.p`
  margin: 0 0 2px 6px;
  white-space: nowrap;
`;
const Tail = styled.svg`
  position: absolute;
  left: 204px;
  top: 71px;
`;

/* ---------- drawing ---------- */

const Arrow = ({ x, y, a }: { x: number; y: number; a: number }) => (
  <path d="M0 0L-16 -3V3Z" fill="#fff" transform={`translate(${x} ${y}) rotate(${a})`} />
);
const hatchLines = Array.from({ length: 30 }, (_, i) => 1556 - 25.7 * i);

const Drawing = () => (
  <Sheet>
    <defs>
      <clipPath id="area"><path d="M617 184L678 663H920Z" /></clipPath>
    </defs>
    <g transform="translate(-54 -131)" fill="none" strokeWidth="1" shapeRendering="crispEdges">
      <g stroke="#ff0">
        <path d="M230 184L291 663.500H533Z" />
        <path d="M252 346L326 335" />
      </g>
      <g stroke="#fff">
        <path d="M254 360L266 358L264 345" />
        <path d="M128 197L225 183M134 196L162 424M166 447L194 676M190 677L286 664" />
        <path d="M201 353L246 346M206 352L224 497M228 521L247 670" />
        <path d="M216 309.500H240M320 272L298 290" />
        <path d="M228 408L257 404M361 391L334 396M327 338L334 400" />
        <path d="M331 333L367 312M362 314L456 465M471 489L569 643M537 660L573 638" />
        <path d="M426 663A107 107 0 0 1 433 625M449 597A107 107 0 0 1 475 573" />
        <path d="M291.500 668V716M532.500 668V716M291 710.500H533" />
        <path d="M66.500 735.500H78.500V747.500H66.500ZM72.500 741.500V682M72.500 741.500H133M133.500 736V748L148 742ZM66.500 682.500H78.500L72.500 667Z" />
      </g>
      <path d="M134 737V747L144 742ZM68 682H77L72.500 671Z" fill="#777" />
      <Arrow x={134} y={196} a={-97} />
      <Arrow x={194} y={675} a={83} />
      <Arrow x={206} y={352} a={-97} />
      <Arrow x={247} y={669} a={83} />
      <Arrow x={246} y={310} a={2} />
      <Arrow x={298} y={290} a={142} />
      <Arrow x={258} y={404} a={-8} />
      <Arrow x={334} y={396} a={172} />
      <Arrow x={362} y={314} a={-122} />
      <Arrow x={568} y={641} a={58} />
      <Arrow x={426} y={663} a={94} />
      <Arrow x={476} y={573} a={-36} />
      <Arrow x={291} y={710.5} a={180} />
      <Arrow x={533} y={710.5} a={0} />
      <g clipPath="url(#area)" stroke="#fff" strokeWidth="2.500">
        {hatchLines.map((s) => (
          <path key={s} d={`M${s - 670} 670L${s - 180} 180M${s - 661} 670L${s - 171} 180`} />
        ))}
      </g>
      <path d="M617 184L678 663.500H920Z" stroke="#ff0" />
      <path d="M621 311.500H676M649.500 284V339M646.500 308.500H652.500V314.500H646.500Z" stroke="#fff" />
    </g>
    <g transform="translate(-54 -131)" textAnchor="middle" fill="#fff">
      <text x="163" y="442">100</text>
      <text x="226" y="516">66.149</text>
      <text x="273" y="309">25°</text>
      <text x="296" y="406">15.785</text>
      <text x="464" y="484">80</text>
      <text x="439" y="618">57.6973°</text>
      <text x="411" y="704">50</text>
      <text x="168" y="748" fontSize="20">X</text>
      <text x="74" y="654" fontSize="20">Y</text>
      <g fill="#ff0">
        <text x="229" y="180">A</text>
        <text x="277" y="684">C</text>
        <text x="547" y="684">D</text>
      </g>
    </g>
  </Sheet>
);

const menus: [string, string, string][] = [
  ['', 'F', 'ile'], ['', 'E', 'dit'], ['', 'V', 'iew'], ['', 'I', 'nsert'], ['F', 'o', 'rmat'], ['', 'T', 'ools'],
  ['', 'D', 'raw'], ['Dime', 'n', 'sion'], ['', 'M', 'odify'], ['E', 'x', 'press'], ['', 'W', 'indow'], ['', 'H', 'elp'],
];

type Row = [string, ReactNode, boolean?];
const sample = <span><Rule $w={23} />ByL...</span>;
const sections: { title: string; rows: Row[] }[] = [
  { title: 'General', rows: [['Color', <span><Swatch />ByLayer</span>], ['Layer', '2'], ['Linet...', sample], ['Linet...', '1'], ['Line...', sample], ['Thic...', '0']] },
  { title: 'Plot style', rows: [['Plot ...', 'ByColor', true], ['Plot ...', 'None'], ['Plot t...', 'Model', true], ['Plot t...', 'Not availa...', true]] },
  { title: 'View', rows: [['Cent...', '344.4973', true], ['Cent...', '-24.3928', true], ['Cent...', '0', true], ['Height', '129.8799', true], ['Width', '222.5923', true]] },
  { title: 'Misc', rows: [['UCS...', 'Yes'], ['UCS...', 'No'], ['UCS...', 'Yes'], ['UCS...', '', true]] },
];

const toggles: [string, number, boolean?][] = [
  ['SNAP', 32], ['GRID', 32], ['ORTHO', 43, true], ['POLAR', 41], ['OSNAP', 40], ['OTRACK', 51], ['DYN', 28], ['LWT', 29], ['MODEL', 44, true],
];

const Small = ({ d, c = '#000', w = 2 }: { d: string; c?: string; w?: number }) => (
  <Glyph width="11" height="11" viewBox="0 0 11 11" aria-hidden="true"><path d={d} fill="none" stroke={c} strokeWidth={w} /></Glyph>
);
const cross = 'M2 2L9 9M9 2L2 9';
const restore = 'M3 3V1H10V7H8M1 4H8V10H1Z';
const tabArrows: [string, string][] = [['First', 'M2 1V9M8 1V9L4 5Z'], ['Previous', 'M7 1V9L3 5Z'], ['Next', 'M3 1V9L7 5Z'], ['Last', 'M8 1V9M2 1V9L6 5Z']];

export default function App() {
  return (
    <Screen>
      <GlobalStyle />
      <TitleBar>
        <Glyph width="16" height="16" viewBox="0 0 16 16">
          {box(0.5, 0.5, 15, 15, '#0b6a68', '#d8f0f0')}
          {stroke('M2 10L5 3L8 10M1 10H13M11 3V14', '#fff', 1.2)}
          {box(10, 9, 4, 4, '#0b6a68', '#fff')}
        </Glyph>
        <Title>AutoCAD 2006 - [Drawing2.dwg]</Title>
        <WindowButton aria-label="Minimize"><Small d="M1 9H6" c="#fff" w={3} /></WindowButton>
        <WindowButton aria-label="Restore"><Small d={restore} c="#fff" w={1.4} /></WindowButton>
        <WindowButton aria-label="Close" $close><Small d="M1 1L10 10M10 1L1 10" c="#fff" /></WindowButton>
      </TitleBar>
      <MenuBar>
        <Glyph width="16" height="16" viewBox="0 0 16 16">
          {box(0.5, 0.5, 13, 13, '#dce8f4', '#55799c')}
          {shape('M3 2H16V13L13 16H3Z', '#14568c', '#0c3a60')}
          {stroke('M9.500 4V14M4 9H15M7 6.500H12V11.500H7Z', '#fff', 1.2)}
        </Glyph>
        <Menus>
          {menus.map(([a, b, c]) => <button key={a + b + c}>{a}<u>{b}</u>{c}</button>)}
        </Menus>
        <ChildButton aria-label="Minimize drawing"><Small d="M2 9H7" c="#666" /></ChildButton>
        <ChildButton aria-label="Restore drawing"><Small d={restore} c="#666" w={1.4} /></ChildButton>
        <ChildButton aria-label="Close drawing"><Small d={cross} c="#555" /></ChildButton>
      </MenuBar>

      <ToolRow>
        <ToolGroup><Tools list="newFile open save | print preview publish | cut copy paste match blockEdit | undo caret redo caretOff | pan zoomRt zoomWin zoomPrev | props designCenter toolPalette sheetSet markup calc | help" /></ToolGroup>
        <ToolGroup $lead={12}>
          <Tools list="textStyle" />
          <ComboBox label="Text style" value="STANDARD" width={100} />
          <Divider /><Tools list="dimStyle" />
          <ComboBox label="Dimension style" value="STANDARD" width={100} />
          <Divider /><Tools list="tableStyle" />
          <ComboBox label="Table style" value="Standard" width={100} />
        </ToolGroup>
        <ToolGroup $lead={8}><Tools list="abcDots abcMask abcBug abcArc" /></ToolGroup>
      </ToolRow>
      <ToolRow>
        <ToolGroup>
          <Tools list="layers" />
          <ComboBox label="Layer" value="2" width={300}>
            <Icon name="bulbOn" size={14} /><Icon name="sun" size={14} /><Icon name="vpFreeze" size={15} /><Icon name="unlock" size={14} /><Swatch />
          </ComboBox>
          <Tools list="makeCurrent layerPrev" />
        </ToolGroup>
        <ToolGroup $lead={10}>
          <ComboBox label="Color" value="ByLayer" width={150}><Swatch /></ComboBox>
          <Divider />
          <ComboBox label="Linetype" value="ByLayer" width={160}><Rule $w={60} /></ComboBox>
          <Divider />
          <ComboBox label="Lineweight" value="ByLayer" width={125}><Rule $w={35} /></ComboBox>
          <Divider />
          <ComboBox label="Plot style" value="ByColor" width={120} off />
        </ToolGroup>
        <ToolGroup $lead={9}><Tools list="layWalk matchYellow trimYellow copyPages spiral bug" /></ToolGroup>
      </ToolRow>
      <ToolRow>
        <ToolGroup><Tools list="snapTemp snapFrom | snapEnd snapMid snapInt snapApp snapExt | snapCen snapQua snapTan | snapPer snapPar snapIns snapNode | snapNear snapNone | snapSet" /></ToolGroup>
        <ToolGroup $lead={10}><Tools list="lib bolt bookmark | sheetCorner stackGrey stackCheck bulbGrey" /></ToolGroup>
        <ToolGroup $lead={10}><Tools list="pageRed pageS" /></ToolGroup>
        <ToolGroup $lead={10}><Tools list="flags blocksSwap | imgA imgB globe pulse | quick | rename" /></ToolGroup>
        <ToolGroup $lead={10}><Tools list="layEdit layMatch layCur layFlat layCopy layIso | snow bulbOff lock lockOpen" /></ToolGroup>
      </ToolRow>

      <Work>
        <PaletteColumn>
          <Palette><Tools list="line xline pline polygon rect arc circle cloud spline ellipse ellArc insBlock mkBlock point hatch gradient region table mtext" /></Palette>
        </PaletteColumn>
        <PaletteColumn>
          <Palette><Tools list="erase copyObj mirror offset array move rotate scale stretch trim extend breakPt breakObj join chamfer fillet explode" /></Palette>
          <Palette><Tools list="front back above under" /></Palette>
        </PaletteColumn>
        <DrawColumn>
          <DrawRow>
            <Canvas>
              <Drawing />
              <Tip role="tooltip">{'HATCH\nLayer: 0, Linetype: ByLayer, Color: ByLayer (White)\nLineweight: ByLayer,  Plot Style: ByLayer\nPattern: STEEL  Area: 2479.7211'}</Tip>
            </Canvas>
            <VScroll>
              <ScrollButton aria-label="Scroll up"><Chevron dir="up" /></ScrollButton>
              <Track $share={26} />
              <ScrollButton aria-label="Scroll position"><Grip /></ScrollButton>
              <Track $share={32} />
              <ScrollButton aria-label="Scroll down"><Chevron /></ScrollButton>
            </VScroll>
          </DrawRow>
          <TabRow>
            {tabArrows.map(([n, d]) => (
              <TabArrow key={n} aria-label={n}><Glyph width="10" height="10" viewBox="0 0 10 10"><path d={d} stroke="#000" /></Glyph></TabArrow>
            ))}
            <Tab $on>Model</Tab>
            <Tab>Layout1</Tab>
            <TabFill />
            <HScroll><ScrollButton aria-label="Scroll left"><Chevron dir="left" /></ScrollButton></HScroll>
          </TabRow>
        </DrawColumn>
        <Bevel />
        <Properties>
          <PanelGrip><GripBars /><PanelClose aria-label="Close palette"><Small d={cross} /></PanelClose></PanelGrip>
          <PickRow>
            <ComboBox label="Selection" value="No selection" width={51} height={24} />
            <PickButtons>
              <ToolButton aria-label="Toggle pickadd"><Icon name="pickAdd" /></ToolButton>
              <ToolButton aria-label="Select objects"><Icon name="selectObj" /></ToolButton>
              <ToolButton aria-label="Quick select"><Icon name="quickSel" /></ToolButton>
            </PickButtons>
          </PickRow>
          {sections.map((s) => (
            <Section key={s.title}>
              <SectionHead>
                {s.title}
                <Glyph width="10" height="10" viewBox="0 0 10 10"><path d="M1 5L5 1L9 5M1 9L5 5L9 9" fill="none" stroke="#fff" strokeWidth="1.4" /></Glyph>
              </SectionHead>
              <Grid>
                <tbody>
                  {s.rows.map(([n, v, ro], i) => (
                    <tr key={i}><Name scope="row">{n}</Name><Value $ro={ro}>{v}</Value></tr>
                  ))}
                </tbody>
              </Grid>
            </Section>
          ))}
          <Hint />
        </Properties>
      </Work>

      <CommandArea>
        <CommandGrip />
        <CommandBox>
          <History>{'HATCH\nCommand: *Cancel*'}</History>
          <Prompt>Command:<input type="text" aria-label="Command" /></Prompt>
        </CommandBox>
      </CommandArea>
      <Status>
        <Coords>372.0334, 3.5417  , 0.0000</Coords>
        {toggles.map(([n, w, on]) => <Toggle key={n} $w={w} $on={on}>{n}</Toggle>)}
        <TrayStart>
          <Glyph width="14" height="14" viewBox="0 0 14 14">
            <path d="M0 1H14V10H12V13L9 10H0Z" fill="#0ff" stroke="#000" />
            <text x="7" y="9" textAnchor="middle" fontSize="8" fontFamily="Liberation Mono">AI</text>
          </Glyph>
        </TrayStart>
        <Tray>
          <Glyph width="16" height="16" viewBox="0 0 16 16">
            {shape('M3 1L9 3L11 8L5 9Z', '#7a94b4', '#44607c')}
            {stroke('M2 14L6 8M1 14H7', '#44607c', 1.5)}
            {shape('M10 5L16 15H4Z', '#ffe21c', '#a08000')}
            {stroke('M10 8V12M10 13V14.500', '#000', 1.6)}
          </Glyph>
          <Glyph width="16" height="16" viewBox="0 0 16 16">
            {stroke('M4 7V4Q8 -1 12 4V7', '#666', 2)}
            {shape('M1 7H15V13Q8 17 1 13Z', '#6c7c84', '#333')}
            {stroke('M1 10H15M1 12.500H15', '#c4ccd0', 0.9)}
          </Glyph>
        </Tray>
        <ToolButton $w={12} $h={18} aria-label="Tray menu"><Glyph width="8" height="5" viewBox="0 0 8 5"><path d="M0 0H8L4 4Z" /></Glyph></ToolButton>
      </Status>

      <Balloon>
        <BalloonHead>
          <Glyph width="16" height="16" viewBox="0 0 16 16">
            <path d="M8 0A7 7 0 0 1 10 13.500L8 16L6 13.500A7 7 0 0 1 8 0Z" fill="#dce8f6" stroke="#8ca4c4" />
            <path d="M7 3H9.500V5H7ZM6 6H9.500V11H11V12H5.500V11H7V7H6Z" fill="#1c3ca8" />
          </Glyph>
          <h2>Communication Center</h2>
          <BalloonClose aria-label="Close message"><Small d={cross} /></BalloonClose>
        </BalloonHead>
        <BalloonText>The easy way to keep you and your software up-to-date.</BalloonText>
        <BalloonText><a href="#updates">Click here.</a></BalloonText>
        <Tail width="42" height="24" viewBox="0 0 42 24" aria-hidden="true">
          <path d="M2 1L38 22L19 1" fill="#ffffe1" stroke="#000" strokeWidth="1.2" />
          <path d="M3 0H19" stroke="#ffffe1" strokeWidth="3" />
        </Tail>
      </Balloon>
    </Screen>
  );
}
